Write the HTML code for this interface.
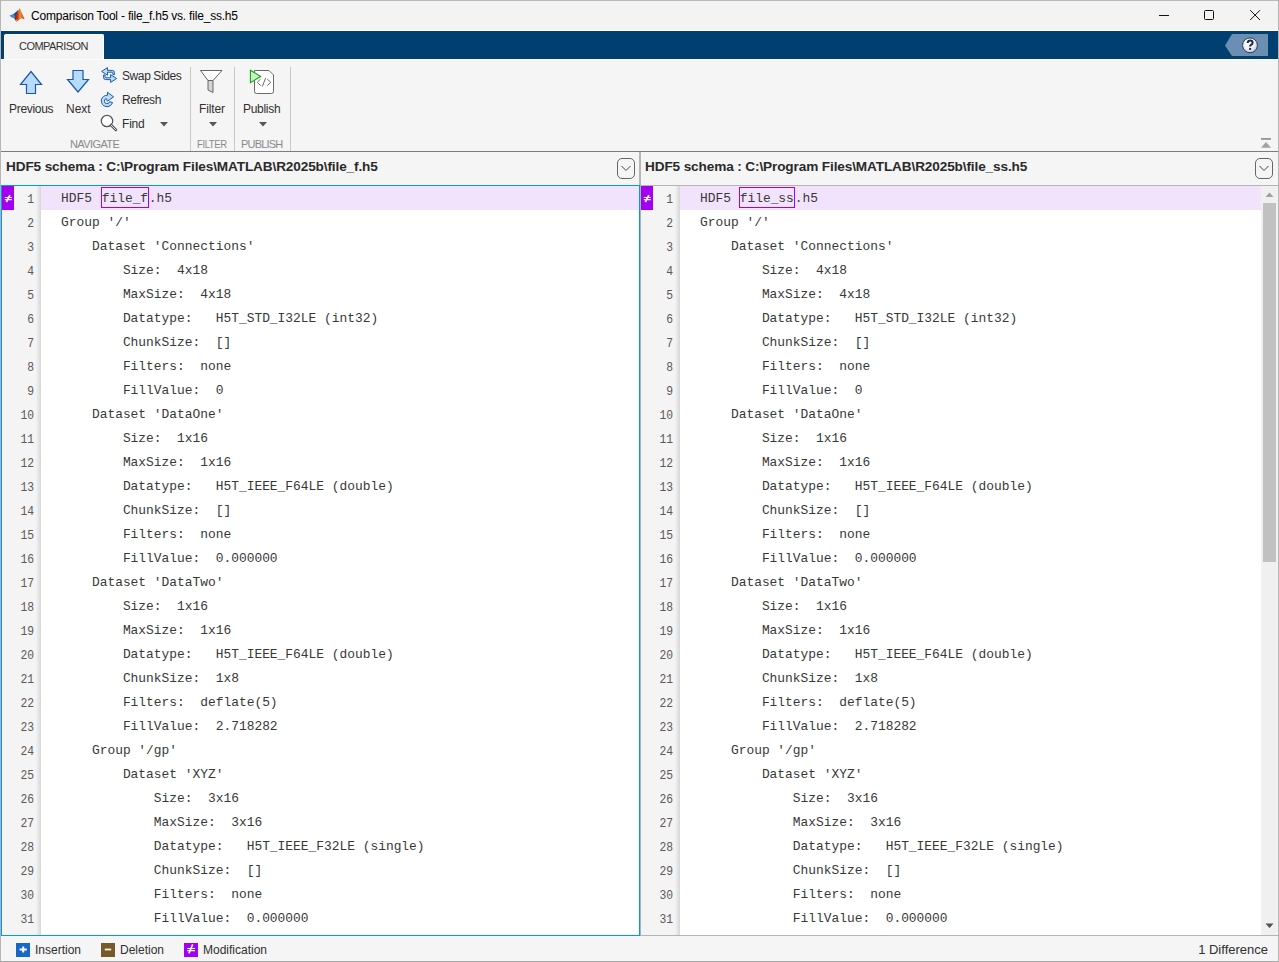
<!DOCTYPE html>
<html><head><meta charset="utf-8">
<style>
*{margin:0;padding:0;box-sizing:border-box}
html,body{width:1279px;height:962px;overflow:hidden;background:#f4f4f4;font-family:"Liberation Sans",sans-serif;color:#1a1a1a}
.abs{position:absolute}
#frame{position:absolute;left:0;top:0;width:1279px;height:962px;border:1px solid #b4b4b4;border-top-color:#b9b9b9;border-bottom-color:#a8a8a8;border-left-color:#b6b6b6;z-index:50;pointer-events:none}
#title{position:absolute;left:1px;top:1px;width:1277px;height:29px;background:#f3f3f3}
#titletxt{position:absolute;left:31px;top:9px;font-size:12px;letter-spacing:-0.2px;color:#000;white-space:nowrap}
#wl{position:absolute;left:1px;top:30px;width:1277px;height:1px;background:#fff}
#blue{position:absolute;left:1px;top:31px;width:1277px;height:28px;background:#003f70}
#tab{position:absolute;left:4px;top:34px;width:100px;height:25px;background:#f4f4f4;border:1px solid #fff;border-bottom:none;border-radius:2px 2px 0 0}
#tabtxt{position:absolute;left:19px;top:40px;font-size:11px;color:#333;letter-spacing:-0.55px}
#wl2{position:absolute;left:1px;top:59px;width:1277px;height:1px;background:#fbfbfb}
#strip{position:absolute;left:1px;top:60px;width:1277px;height:91px;background:#f5f5f5}
#stripline{position:absolute;left:1px;top:151px;width:1277px;height:1px;background:#7c7c7c}
.lbl{position:absolute;font-size:12px;color:#303030;white-space:nowrap}
.grp{position:absolute;font-size:11px;color:#8a8a8a;white-space:nowrap;top:138px}
.sep{position:absolute;top:67px;width:1px;height:84px;background:#c8c8c8}
/* panes */
.hdr{position:absolute;top:152px;height:33px;background:#f5f5f5}
.hdrtxt{position:absolute;top:159px;font-size:13.6px;letter-spacing:-0.12px;font-weight:bold;color:#2a2a2a;white-space:nowrap}
.dd{position:absolute;top:158px;width:18px;height:21px;border:1px solid #6e6e6e;border-radius:5px}
.codearea{position:absolute;top:186px;height:749px;background:#fff;overflow:hidden}
.gut{position:absolute;top:0;height:749px;background:#f4f4f4}
.marker{position:absolute;top:0;width:12px;height:24px;background:#a100f2;color:#fff;font-size:12px;font-weight:bold;text-align:center;line-height:24px}
.row{position:absolute;left:0;width:1000px;height:24px}
.row.mod{background:#f2e3fc}
.t{position:absolute;left:20px;top:1px;font-family:"Liberation Mono",monospace;font-size:12.9px;line-height:24px;color:#383838;white-space:pre}
.hlbox{position:absolute;top:1px;height:21px;border:1px solid #a100f2}
.num{position:absolute;right:7px;margin-top:2px;width:30px;text-align:right;transform:scaleX(0.9);transform-origin:100% 50%;font-family:"Liberation Mono",monospace;font-size:12.6px;line-height:24px;color:#5a5a5a}
#status{position:absolute;left:1px;top:936px;width:1277px;height:25px;background:#f5f5f5}
.stxt{position:absolute;top:943px;font-size:12px;color:#303030;white-space:nowrap}
.sico{position:absolute;top:943px;width:14px;height:14px;color:#fff;font-size:12px;font-weight:bold;text-align:center;line-height:14px}
</style></head><body>
<div id="frame"></div>
<div class="abs" style="left:0;top:185px;width:1px;height:751px;background:#bdaea2;z-index:51"></div>
<div id="title"></div>
<svg class="abs" style="left:8px;top:7px" width="18" height="17" viewBox="0 0 18 17">
 <defs><linearGradient id="mg" x1="6" y1="0" x2="17" y2="0" gradientUnits="userSpaceOnUse">
 <stop offset="0" stop-color="#8a1612"/><stop offset="0.3" stop-color="#b8301a"/><stop offset="0.55" stop-color="#f0923a"/><stop offset="0.75" stop-color="#e2602a"/><stop offset="1" stop-color="#c8401e"/></linearGradient></defs>
 <polygon points="1.4,8.7 6.2,6.6 10.4,3 7.4,9.5 6.2,11.2 3.8,10.6" fill="#3a8ddb"/>
 <polygon points="6.2,6.8 10.4,3 8.5,8.5 7,10" fill="#24427a"/>
 <polygon points="6.2,11.2 11.7,1.1 16.6,12.3 13.2,11.3 8.4,14.8" fill="url(#mg)"/>
 <polygon points="7.6,13 10.2,12.2 8.4,14.8" fill="#f4b424"/>
</svg>
<div id="titletxt">Comparison Tool - file_f.h5 vs. file_ss.h5</div>
<!-- window controls -->
<div class="abs" style="left:1159px;top:15px;width:10px;height:1px;background:#111"></div>
<div class="abs" style="left:1204px;top:10px;width:10px;height:10px;border:1px solid #111;border-radius:1.5px"></div>
<svg class="abs" style="left:1249px;top:9px" width="13" height="13" viewBox="0 0 13 13"><path d="M1.2 1.2L11 11M11 1.2L1.2 11" stroke="#111" stroke-width="1"/></svg>
<div id="wl"></div>
<div id="blue"></div>
<div id="tab"></div>
<div id="tabtxt">COMPARISON</div>
<!-- help -->
<svg class="abs" style="left:1224px;top:34px" width="45" height="23" viewBox="0 0 45 23">
 <defs><radialGradient id="hg" cx="0.4" cy="0.3" r="0.75"><stop offset="0" stop-color="#ffffff"/><stop offset="0.6" stop-color="#eef0f4"/><stop offset="1" stop-color="#b8c2d0"/></radialGradient></defs>
 <polygon points="1,11.5 8,0 44,0 44,22 8,22" fill="#6a8fb3"/>
 <circle cx="26" cy="11.3" r="7.4" fill="url(#hg)" stroke="#1e2e48" stroke-width="0.9"/>
 <path d="M23.7 9.1Q23.7 6.6 26.1 6.6Q28.6 6.6 28.6 8.8Q28.6 10.1 27.1 10.9Q26.1 11.5 26.1 12.6" fill="none" stroke="#1c2842" stroke-width="2"/>
 <rect x="25.1" y="13.9" width="2" height="2" fill="#1c2842"/>
</svg>
<div id="wl2"></div>
<div id="strip"></div>
<div id="stripline"></div>

<!-- toolstrip -->
<svg class="abs" style="left:19px;top:70px" width="25" height="25" viewBox="0 0 25 25">
 <polygon points="12,1.5 22.5,14.5 16.5,14.5 16.5,23.5 7.5,23.5 7.5,14.5 1.5,14.5" fill="#b7dcfb" stroke="#1859a9" stroke-width="1.2" stroke-linejoin="miter"/>
</svg>
<svg class="abs" style="left:66px;top:69px" width="25" height="25" viewBox="0 0 25 25">
 <polygon points="7,1.5 17,1.5 17,10.5 22.5,10.5 12,23 1.5,10.5 7,10.5" fill="#b7dcfb" stroke="#1859a9" stroke-width="1.2"/>
</svg>
<div class="lbl" style="left:9px;top:102px;letter-spacing:-0.3px">Previous</div>
<div class="lbl" style="left:66px;top:102px">Next</div>
<svg class="abs" style="left:98px;top:64px" width="22" height="22" viewBox="0 0 22 22">
 <path d="M3.6 7.4L9.5 3.6V6.4H14.3Q16.4 6.4 16.4 8.5V10.6H14.9V9.1Q14.9 8.2 14 8.2H9.5V11.2Z" fill="#b8defc" stroke="#1652a8" stroke-width="0.95" stroke-linejoin="miter"/>
 <path d="M18.6 14.5L12.6 18.4V15.6H7.7Q5.6 15.6 5.6 13.5V11H7.1V12.9Q7.1 13.8 8 13.8H12.6V10.7Z" fill="#b8defc" stroke="#1652a8" stroke-width="0.95" stroke-linejoin="miter"/>
</svg>
<div class="lbl" style="left:122px;top:69px;letter-spacing:-0.4px">Swap Sides</div>
<svg class="abs" style="left:98px;top:88px" width="22" height="22" viewBox="0 0 22 22">
 <path d="M9.5 4.3L15.6 8.9L9.4 13.2L8.3 10.6A2.6 2.6 0 1 0 11.5 13.7L14.5 14.5A5.7 5.7 0 1 1 9.5 7.3Z" fill="#b8defc" stroke="#1652a8" stroke-width="0.95" stroke-linejoin="miter"/>
</svg>
<div class="lbl" style="left:122px;top:93px;letter-spacing:-0.45px">Refresh</div>
<svg class="abs" style="left:100px;top:114px" width="18" height="18" viewBox="0 0 18 18">
 <circle cx="7" cy="7" r="5.7" fill="#fff" stroke="#555" stroke-width="1.2"/>
 <path d="M11 11L16 16" stroke="#555" stroke-width="2.6" stroke-linecap="round"/>
 <path d="M11 11L16 16" stroke="#ddd" stroke-width="1" stroke-linecap="round"/>
</svg>
<div class="lbl" style="left:122px;top:117px;letter-spacing:-0.2px">Find</div>
<svg class="abs" style="left:160px;top:122px" width="8" height="5" viewBox="0 0 8 5"><polygon points="0,0 8,0 4,4.5" fill="#555"/></svg>
<div class="grp" style="left:70px;letter-spacing:-0.6px">NAVIGATE</div>
<div class="sep" style="left:190px"></div>
<svg class="abs" style="left:199px;top:69px" width="25" height="25" viewBox="0 0 25 25">
 <polygon points="1.5,1.5 23,1.5 14,11.5 9,11.5" fill="#fff" stroke="#666" stroke-width="1"/>
 <polygon points="9,11.5 14,11.5 14,23.5 9,21" fill="#d4d4d4" stroke="#666" stroke-width="1"/>
</svg>
<div class="lbl" style="left:199px;top:102px;letter-spacing:-0.15px">Filter</div>
<svg class="abs" style="left:209px;top:122px" width="8" height="5" viewBox="0 0 8 5"><polygon points="0,0 8,0 4,4.5" fill="#555"/></svg>
<div class="grp" style="left:197px;letter-spacing:-0.5px;transform:scaleX(0.87);transform-origin:0 0">FILTER</div>
<div class="sep" style="left:234px"></div>
<svg class="abs" style="left:249px;top:69px" width="26" height="26" viewBox="0 0 26 26">
 <path d="M5.5 1.5H20L24.5 6V22.5A2 2 0 0 1 22.5 24.5H7.5A2 2 0 0 1 5.5 22.5Z" fill="#fff" stroke="#6a6a6a" stroke-width="1"/>
 <path d="M11.6 10.1L8.3 13.3L11.6 16.6M16.6 9.1L13.3 17.6M18.3 10.1L21.8 13.3L18.3 16.6" fill="none" stroke="#5a5a5a" stroke-width="0.9"/>
 <polygon points="1.4,1.3 11.7,7.5 1.4,13.6" fill="#c4f5bd" stroke="#19a019" stroke-width="1.1"/>
</svg>
<div class="lbl" style="left:243px;top:102px;letter-spacing:-0.3px">Publish</div>
<svg class="abs" style="left:259px;top:122px" width="8" height="5" viewBox="0 0 8 5"><polygon points="0,0 8,0 4,4.5" fill="#555"/></svg>
<div class="grp" style="left:241px;letter-spacing:-0.8px">PUBLISH</div>
<div class="sep" style="left:290px"></div>
<svg class="abs" style="left:1261px;top:138px" width="11" height="11" viewBox="0 0 11 11">
 <rect x="0" y="0" width="10" height="1.8" fill="#959595"/>
 <polygon points="5,3.9 10,9.8 0,9.8" fill="#a2a2a2"/>
</svg>

<!-- left pane -->
<div class="hdr" style="left:1px;width:639px"></div>
<div class="hdrtxt" style="left:6px">HDF5 schema : C:\Program Files\MATLAB\R2025b\file_f.h5</div>
<svg class="abs" style="left:616px;top:157px" width="20" height="23" viewBox="0 0 20 23"><rect x="1.5" y="1.5" width="17" height="20" rx="4.5" fill="none" stroke="#666" stroke-width="1"/><path d="M5.5 9L10 13.5L14.5 9" fill="none" stroke="#444" stroke-width="1"/></svg>
<div class="codearea" style="left:2px;width:637px">
 <div class="gut" style="left:0px;width:39px"></div>
 <div class="abs" style="left:34px;top:0;width:5px;height:749px;background:linear-gradient(to right,rgba(0,0,0,0),rgba(0,0,0,0.12))"></div>
 <div class="abs" style="left:0;top:0;width:39px;height:749px"><div class="num" style="top:0px">1</div>
<div class="num" style="top:24px">2</div>
<div class="num" style="top:48px">3</div>
<div class="num" style="top:72px">4</div>
<div class="num" style="top:96px">5</div>
<div class="num" style="top:120px">6</div>
<div class="num" style="top:144px">7</div>
<div class="num" style="top:168px">8</div>
<div class="num" style="top:192px">9</div>
<div class="num" style="top:216px">10</div>
<div class="num" style="top:240px">11</div>
<div class="num" style="top:264px">12</div>
<div class="num" style="top:288px">13</div>
<div class="num" style="top:312px">14</div>
<div class="num" style="top:336px">15</div>
<div class="num" style="top:360px">16</div>
<div class="num" style="top:384px">17</div>
<div class="num" style="top:408px">18</div>
<div class="num" style="top:432px">19</div>
<div class="num" style="top:456px">20</div>
<div class="num" style="top:480px">21</div>
<div class="num" style="top:504px">22</div>
<div class="num" style="top:528px">23</div>
<div class="num" style="top:552px">24</div>
<div class="num" style="top:576px">25</div>
<div class="num" style="top:600px">26</div>
<div class="num" style="top:624px">27</div>
<div class="num" style="top:648px">28</div>
<div class="num" style="top:672px">29</div>
<div class="num" style="top:696px">30</div>
<div class="num" style="top:720px">31</div></div>
 <div class="abs" style="left:39px;top:0;width:598px;height:749px;overflow:hidden"><div class="row mod" style="top:0px"><div class="hlbox" style="left:60px;width:48px"></div><span class="t">HDF5&#160;<span style="margin-left:2px">file_f</span><span style="margin-left:0.6px">.h5</span></span></div>
<div class="row" style="top:24px"><span class="t">Group&#160;'/'</span></div>
<div class="row" style="top:48px"><span class="t">&#160;&#160;&#160;&#160;Dataset&#160;'Connections'</span></div>
<div class="row" style="top:72px"><span class="t">&#160;&#160;&#160;&#160;&#160;&#160;&#160;&#160;Size:&#160;&#160;4x18</span></div>
<div class="row" style="top:96px"><span class="t">&#160;&#160;&#160;&#160;&#160;&#160;&#160;&#160;MaxSize:&#160;&#160;4x18</span></div>
<div class="row" style="top:120px"><span class="t">&#160;&#160;&#160;&#160;&#160;&#160;&#160;&#160;Datatype:&#160;&#160;&#160;H5T_STD_I32LE&#160;(int32)</span></div>
<div class="row" style="top:144px"><span class="t">&#160;&#160;&#160;&#160;&#160;&#160;&#160;&#160;ChunkSize:&#160;&#160;[]</span></div>
<div class="row" style="top:168px"><span class="t">&#160;&#160;&#160;&#160;&#160;&#160;&#160;&#160;Filters:&#160;&#160;none</span></div>
<div class="row" style="top:192px"><span class="t">&#160;&#160;&#160;&#160;&#160;&#160;&#160;&#160;FillValue:&#160;&#160;0</span></div>
<div class="row" style="top:216px"><span class="t">&#160;&#160;&#160;&#160;Dataset&#160;'DataOne'</span></div>
<div class="row" style="top:240px"><span class="t">&#160;&#160;&#160;&#160;&#160;&#160;&#160;&#160;Size:&#160;&#160;1x16</span></div>
<div class="row" style="top:264px"><span class="t">&#160;&#160;&#160;&#160;&#160;&#160;&#160;&#160;MaxSize:&#160;&#160;1x16</span></div>
<div class="row" style="top:288px"><span class="t">&#160;&#160;&#160;&#160;&#160;&#160;&#160;&#160;Datatype:&#160;&#160;&#160;H5T_IEEE_F64LE&#160;(double)</span></div>
<div class="row" style="top:312px"><span class="t">&#160;&#160;&#160;&#160;&#160;&#160;&#160;&#160;ChunkSize:&#160;&#160;[]</span></div>
<div class="row" style="top:336px"><span class="t">&#160;&#160;&#160;&#160;&#160;&#160;&#160;&#160;Filters:&#160;&#160;none</span></div>
<div class="row" style="top:360px"><span class="t">&#160;&#160;&#160;&#160;&#160;&#160;&#160;&#160;FillValue:&#160;&#160;0.000000</span></div>
<div class="row" style="top:384px"><span class="t">&#160;&#160;&#160;&#160;Dataset&#160;'DataTwo'</span></div>
<div class="row" style="top:408px"><span class="t">&#160;&#160;&#160;&#160;&#160;&#160;&#160;&#160;Size:&#160;&#160;1x16</span></div>
<div class="row" style="top:432px"><span class="t">&#160;&#160;&#160;&#160;&#160;&#160;&#160;&#160;MaxSize:&#160;&#160;1x16</span></div>
<div class="row" style="top:456px"><span class="t">&#160;&#160;&#160;&#160;&#160;&#160;&#160;&#160;Datatype:&#160;&#160;&#160;H5T_IEEE_F64LE&#160;(double)</span></div>
<div class="row" style="top:480px"><span class="t">&#160;&#160;&#160;&#160;&#160;&#160;&#160;&#160;ChunkSize:&#160;&#160;1x8</span></div>
<div class="row" style="top:504px"><span class="t">&#160;&#160;&#160;&#160;&#160;&#160;&#160;&#160;Filters:&#160;&#160;deflate(5)</span></div>
<div class="row" style="top:528px"><span class="t">&#160;&#160;&#160;&#160;&#160;&#160;&#160;&#160;FillValue:&#160;&#160;2.718282</span></div>
<div class="row" style="top:552px"><span class="t">&#160;&#160;&#160;&#160;Group&#160;'/gp'</span></div>
<div class="row" style="top:576px"><span class="t">&#160;&#160;&#160;&#160;&#160;&#160;&#160;&#160;Dataset&#160;'XYZ'</span></div>
<div class="row" style="top:600px"><span class="t">&#160;&#160;&#160;&#160;&#160;&#160;&#160;&#160;&#160;&#160;&#160;&#160;Size:&#160;&#160;3x16</span></div>
<div class="row" style="top:624px"><span class="t">&#160;&#160;&#160;&#160;&#160;&#160;&#160;&#160;&#160;&#160;&#160;&#160;MaxSize:&#160;&#160;3x16</span></div>
<div class="row" style="top:648px"><span class="t">&#160;&#160;&#160;&#160;&#160;&#160;&#160;&#160;&#160;&#160;&#160;&#160;Datatype:&#160;&#160;&#160;H5T_IEEE_F32LE&#160;(single)</span></div>
<div class="row" style="top:672px"><span class="t">&#160;&#160;&#160;&#160;&#160;&#160;&#160;&#160;&#160;&#160;&#160;&#160;ChunkSize:&#160;&#160;[]</span></div>
<div class="row" style="top:696px"><span class="t">&#160;&#160;&#160;&#160;&#160;&#160;&#160;&#160;&#160;&#160;&#160;&#160;Filters:&#160;&#160;none</span></div>
<div class="row" style="top:720px"><span class="t">&#160;&#160;&#160;&#160;&#160;&#160;&#160;&#160;&#160;&#160;&#160;&#160;FillValue:&#160;&#160;0.000000</span></div></div>
 <svg class="marker" width="12" height="24" viewBox="0 0 12 24"><rect width="12" height="24" fill="#a300f2"/><path d="M2.8 11.5H9.8M2.8 13.6H9.8" stroke="#fff" stroke-width="1.1"/><path d="M7.9 9.2L4.4 16" stroke="#fff" stroke-width="1.7"/></svg>
</div>
<div class="abs" style="left:1px;top:185px;width:639px;height:751px;border:1px solid #0098fe"></div>

<!-- divider -->
<div class="abs" style="left:639px;top:152px;width:2px;height:33px;background:#b6b6b6"></div>
<div class="abs" style="left:640px;top:185px;width:1px;height:751px;background:#b0b0b0"></div>

<!-- right pane -->
<div class="hdr" style="left:641px;width:637px"></div>
<div class="hdrtxt" style="left:645px">HDF5 schema : C:\Program Files\MATLAB\R2025b\file_ss.h5</div>
<svg class="abs" style="left:1254px;top:157px" width="20" height="23" viewBox="0 0 20 23"><rect x="1.5" y="1.5" width="17" height="20" rx="4.5" fill="none" stroke="#666" stroke-width="1"/><path d="M5.5 9L10 13.5L14.5 9" fill="none" stroke="#444" stroke-width="1"/></svg>
<div class="abs" style="left:641px;top:185px;width:637px;height:1px;background:#b4b4b4"></div>
<div class="codearea" style="left:641px;width:620px">
 <div class="gut" style="left:0px;width:39px"></div>
 <div class="abs" style="left:34px;top:0;width:5px;height:749px;background:linear-gradient(to right,rgba(0,0,0,0),rgba(0,0,0,0.12))"></div>
 <div class="abs" style="left:0;top:0;width:39px;height:749px"><div class="num" style="top:0px">1</div>
<div class="num" style="top:24px">2</div>
<div class="num" style="top:48px">3</div>
<div class="num" style="top:72px">4</div>
<div class="num" style="top:96px">5</div>
<div class="num" style="top:120px">6</div>
<div class="num" style="top:144px">7</div>
<div class="num" style="top:168px">8</div>
<div class="num" style="top:192px">9</div>
<div class="num" style="top:216px">10</div>
<div class="num" style="top:240px">11</div>
<div class="num" style="top:264px">12</div>
<div class="num" style="top:288px">13</div>
<div class="num" style="top:312px">14</div>
<div class="num" style="top:336px">15</div>
<div class="num" style="top:360px">16</div>
<div class="num" style="top:384px">17</div>
<div class="num" style="top:408px">18</div>
<div class="num" style="top:432px">19</div>
<div class="num" style="top:456px">20</div>
<div class="num" style="top:480px">21</div>
<div class="num" style="top:504px">22</div>
<div class="num" style="top:528px">23</div>
<div class="num" style="top:552px">24</div>
<div class="num" style="top:576px">25</div>
<div class="num" style="top:600px">26</div>
<div class="num" style="top:624px">27</div>
<div class="num" style="top:648px">28</div>
<div class="num" style="top:672px">29</div>
<div class="num" style="top:696px">30</div>
<div class="num" style="top:720px">31</div></div>
 <div class="abs" style="left:39px;top:0;width:581px;height:749px;overflow:hidden"><div class="row mod" style="top:0px"><div class="hlbox" style="left:59px;width:56px"></div><span class="t">HDF5&#160;<span style="margin-left:1px">file_ss</span><span style="margin-left:1px">.h5</span></span></div>
<div class="row" style="top:24px"><span class="t">Group&#160;'/'</span></div>
<div class="row" style="top:48px"><span class="t">&#160;&#160;&#160;&#160;Dataset&#160;'Connections'</span></div>
<div class="row" style="top:72px"><span class="t">&#160;&#160;&#160;&#160;&#160;&#160;&#160;&#160;Size:&#160;&#160;4x18</span></div>
<div class="row" style="top:96px"><span class="t">&#160;&#160;&#160;&#160;&#160;&#160;&#160;&#160;MaxSize:&#160;&#160;4x18</span></div>
<div class="row" style="top:120px"><span class="t">&#160;&#160;&#160;&#160;&#160;&#160;&#160;&#160;Datatype:&#160;&#160;&#160;H5T_STD_I32LE&#160;(int32)</span></div>
<div class="row" style="top:144px"><span class="t">&#160;&#160;&#160;&#160;&#160;&#160;&#160;&#160;ChunkSize:&#160;&#160;[]</span></div>
<div class="row" style="top:168px"><span class="t">&#160;&#160;&#160;&#160;&#160;&#160;&#160;&#160;Filters:&#160;&#160;none</span></div>
<div class="row" style="top:192px"><span class="t">&#160;&#160;&#160;&#160;&#160;&#160;&#160;&#160;FillValue:&#160;&#160;0</span></div>
<div class="row" style="top:216px"><span class="t">&#160;&#160;&#160;&#160;Dataset&#160;'DataOne'</span></div>
<div class="row" style="top:240px"><span class="t">&#160;&#160;&#160;&#160;&#160;&#160;&#160;&#160;Size:&#160;&#160;1x16</span></div>
<div class="row" style="top:264px"><span class="t">&#160;&#160;&#160;&#160;&#160;&#160;&#160;&#160;MaxSize:&#160;&#160;1x16</span></div>
<div class="row" style="top:288px"><span class="t">&#160;&#160;&#160;&#160;&#160;&#160;&#160;&#160;Datatype:&#160;&#160;&#160;H5T_IEEE_F64LE&#160;(double)</span></div>
<div class="row" style="top:312px"><span class="t">&#160;&#160;&#160;&#160;&#160;&#160;&#160;&#160;ChunkSize:&#160;&#160;[]</span></div>
<div class="row" style="top:336px"><span class="t">&#160;&#160;&#160;&#160;&#160;&#160;&#160;&#160;Filters:&#160;&#160;none</span></div>
<div class="row" style="top:360px"><span class="t">&#160;&#160;&#160;&#160;&#160;&#160;&#160;&#160;FillValue:&#160;&#160;0.000000</span></div>
<div class="row" style="top:384px"><span class="t">&#160;&#160;&#160;&#160;Dataset&#160;'DataTwo'</span></div>
<div class="row" style="top:408px"><span class="t">&#160;&#160;&#160;&#160;&#160;&#160;&#160;&#160;Size:&#160;&#160;1x16</span></div>
<div class="row" style="top:432px"><span class="t">&#160;&#160;&#160;&#160;&#160;&#160;&#160;&#160;MaxSize:&#160;&#160;1x16</span></div>
<div class="row" style="top:456px"><span class="t">&#160;&#160;&#160;&#160;&#160;&#160;&#160;&#160;Datatype:&#160;&#160;&#160;H5T_IEEE_F64LE&#160;(double)</span></div>
<div class="row" style="top:480px"><span class="t">&#160;&#160;&#160;&#160;&#160;&#160;&#160;&#160;ChunkSize:&#160;&#160;1x8</span></div>
<div class="row" style="top:504px"><span class="t">&#160;&#160;&#160;&#160;&#160;&#160;&#160;&#160;Filters:&#160;&#160;deflate(5)</span></div>
<div class="row" style="top:528px"><span class="t">&#160;&#160;&#160;&#160;&#160;&#160;&#160;&#160;FillValue:&#160;&#160;2.718282</span></div>
<div class="row" style="top:552px"><span class="t">&#160;&#160;&#160;&#160;Group&#160;'/gp'</span></div>
<div class="row" style="top:576px"><span class="t">&#160;&#160;&#160;&#160;&#160;&#160;&#160;&#160;Dataset&#160;'XYZ'</span></div>
<div class="row" style="top:600px"><span class="t">&#160;&#160;&#160;&#160;&#160;&#160;&#160;&#160;&#160;&#160;&#160;&#160;Size:&#160;&#160;3x16</span></div>
<div class="row" style="top:624px"><span class="t">&#160;&#160;&#160;&#160;&#160;&#160;&#160;&#160;&#160;&#160;&#160;&#160;MaxSize:&#160;&#160;3x16</span></div>
<div class="row" style="top:648px"><span class="t">&#160;&#160;&#160;&#160;&#160;&#160;&#160;&#160;&#160;&#160;&#160;&#160;Datatype:&#160;&#160;&#160;H5T_IEEE_F32LE&#160;(single)</span></div>
<div class="row" style="top:672px"><span class="t">&#160;&#160;&#160;&#160;&#160;&#160;&#160;&#160;&#160;&#160;&#160;&#160;ChunkSize:&#160;&#160;[]</span></div>
<div class="row" style="top:696px"><span class="t">&#160;&#160;&#160;&#160;&#160;&#160;&#160;&#160;&#160;&#160;&#160;&#160;Filters:&#160;&#160;none</span></div>
<div class="row" style="top:720px"><span class="t">&#160;&#160;&#160;&#160;&#160;&#160;&#160;&#160;&#160;&#160;&#160;&#160;FillValue:&#160;&#160;0.000000</span></div></div>
 <svg class="marker" width="12" height="24" viewBox="0 0 12 24"><rect width="12" height="24" fill="#a300f2"/><path d="M2.8 11.5H9.8M2.8 13.6H9.8" stroke="#fff" stroke-width="1.1"/><path d="M7.9 9.2L4.4 16" stroke="#fff" stroke-width="1.7"/></svg>
</div>
<!-- scrollbar -->
<div class="abs" style="left:1261px;top:186px;width:16px;height:749px;background:#f0f0f0"></div>
<svg class="abs" style="left:1265px;top:192px" width="9" height="6" viewBox="0 0 9 6"><polygon points="4.5,0.5 8.5,5 0.5,5" fill="#a0a0a0"/></svg>
<div class="abs" style="left:1263px;top:203px;width:13px;height:359px;background:#c1c1c1"></div>
<svg class="abs" style="left:1265px;top:923px" width="9" height="6" viewBox="0 0 9 6"><polygon points="0.5,0.5 8.5,0.5 4.5,5" fill="#505050"/></svg>
<div class="abs" style="left:641px;top:935px;width:637px;height:1px;background:#b4b4b4"></div>

<!-- status -->
<div id="status"></div>
<svg class="abs" style="left:16px;top:943px" width="14" height="14" viewBox="0 0 14 14"><rect width="14" height="14" fill="#1668c2"/><path d="M3.6 6.6H10.8M7.2 3.6V9.4" stroke="#fff" stroke-width="2"/></svg>
<div class="stxt" style="left:35px">Insertion</div>
<svg class="abs" style="left:101px;top:943px" width="14" height="14" viewBox="0 0 14 14"><rect width="14" height="14" fill="#775a2a"/><path d="M3.8 6.5H10.2" stroke="#fff6dc" stroke-width="1.8"/></svg>
<div class="stxt" style="left:120px">Deletion</div>
<svg class="abs" style="left:184px;top:943px" width="14" height="14" viewBox="0 0 14 14"><rect width="14" height="14" fill="#a100f2"/><path d="M3.2 5.5H11M3.2 7.6H11" stroke="#fff" stroke-width="1.1"/><path d="M8.7 1.4L4.9 10.4" stroke="#fff" stroke-width="1.5"/></svg>
<div class="stxt" style="left:203px">Modification</div>
<div class="stxt" style="right:11px;font-size:13px;top:942px">1 Difference</div>
</body></html>
